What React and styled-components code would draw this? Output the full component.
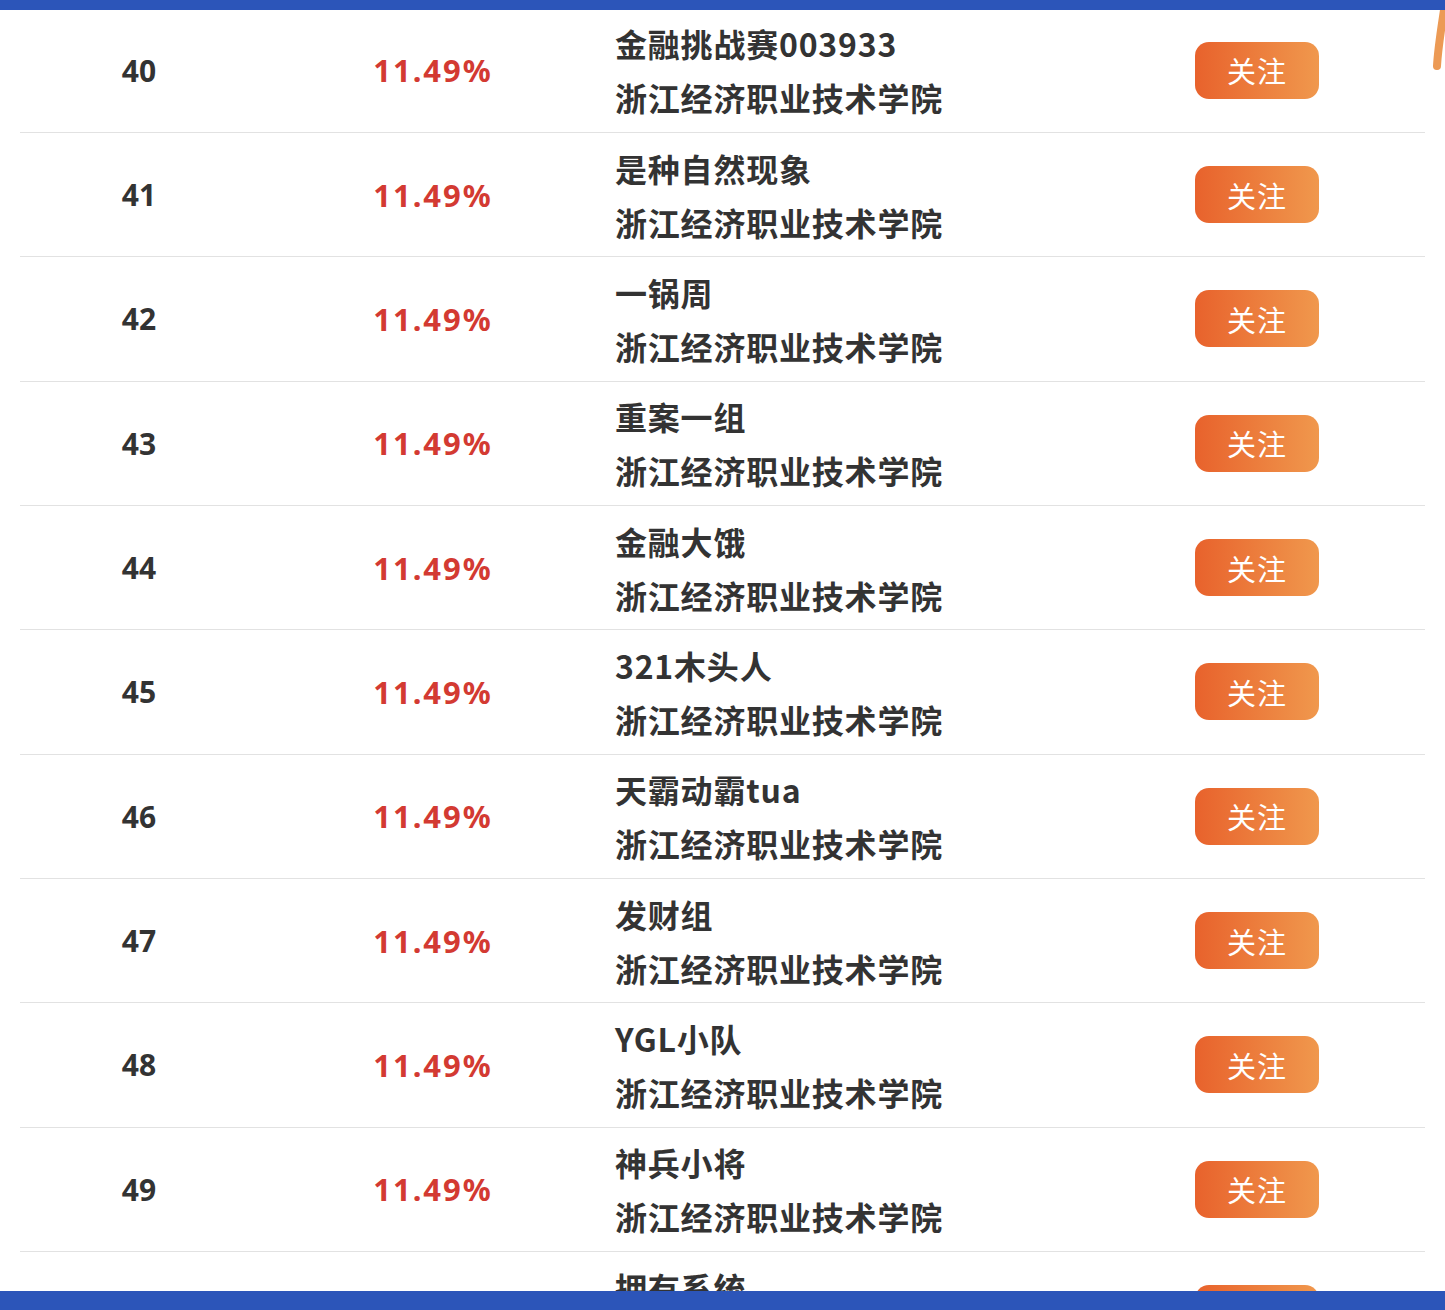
import React from "react";
import styled, { createGlobalStyle } from "styled-components";

const GlobalStyle = createGlobalStyle`
  html, body {
    margin: 0;
    padding: 0;
    background: #ffffff;
  }
  body {
    font-family: "Noto Sans CJK SC", "Noto Sans", sans-serif;
  }
`;

// Full screen frame: blue bars top and bottom, scroll area between
const Screen = styled.div`
  display: flex;
  flex-direction: column;
  width: 1445px;
  height: 1310px;
  overflow: hidden;
  background: #ffffff;
`;

const Bar = styled.div`
  flex: 0 0 ${props => props.size}px;
  background: #2c55b9;
  position: relative;
  z-index: 2;
`;

const Viewport = styled.div`
  position: relative;
  flex: 1;
  overflow: hidden;
`;

// Edge of a decoration that sits behind the list on the right
const Squiggle = styled.svg`
  position: absolute;
  top: 0;
  right: 0;
  width: 16px;
  height: 62px;
`;

const List = styled.ul`
  list-style: none;
  margin: -1.4px 20px 0;
  padding: 0;
`;

const Row = styled.li`
  box-sizing: border-box;
  display: grid;
  grid-template-columns: 238px 350px 1fr 124px;
  align-items: center;
  height: 124.33px;
  padding-right: 106px;
  border-bottom: 1px solid #e2e2e2;
`;

const Rank = styled.div`
  text-align: center;
  font-family: "Noto Sans", sans-serif;
  font-weight: 700;
  font-size: 30px;
  color: #333333;
`;

const Rate = styled.div`
  text-align: center;
  font-family: "Noto Sans", sans-serif;
  font-weight: 700;
  font-size: 31px;
  letter-spacing: 2px;
  color: #d33a32;
`;

const Team = styled.div`
  display: flex;
  flex-direction: column;
  padding-left: 7px;
  font-weight: 700;
  font-size: 32px;
  letter-spacing: 0.8px;
  line-height: 54px;
  color: #333333;
  white-space: nowrap;
`;

const FollowButton = styled.button`
  width: 124px;
  height: 57px;
  border: none;
  border-radius: 14px;
  background: linear-gradient(90deg, #e8622c 0%, #f0984d 100%);
  color: #ffffff;
  font-family: "Noto Sans CJK SC", sans-serif;
  font-size: 29px;
  font-weight: 400;
  letter-spacing: 1px;
  padding: 0;
  cursor: pointer;
`;

const rows = [
  { rank: 40, name: "金融挑战赛003933" },
  { rank: 41, name: "是种自然现象" },
  { rank: 42, name: "一锅周" },
  { rank: 43, name: "重案一组" },
  { rank: 44, name: "金融大饿" },
  { rank: 45, name: "321木头人" },
  { rank: 46, name: "天霸动霸tua" },
  { rank: 47, name: "发财组" },
  { rank: 48, name: "YGL小队" },
  { rank: 49, name: "神兵小将" },
  { rank: 50, name: "拥有系统" }
];

export default function App() {
  return (
    <Screen>
      <GlobalStyle />
      <Bar size={10} />
      <Viewport>
        <List>
          {rows.map(r => (
            <Row key={r.rank}>
              <Rank>{r.rank}</Rank>
              <Rate>11.49%</Rate>
              <Team>
                <span>{r.name}</span>
                <span>浙江经济职业技术学院</span>
              </Team>
              <FollowButton>关注</FollowButton>
            </Row>
          ))}
        </List>
        <Squiggle viewBox="0 0 16 62">
          <path
            d="M15 0 C12 20 9 38 8 56"
            fill="none"
            stroke="#ec9a55"
            strokeWidth="8"
            strokeLinecap="round"
          />
        </Squiggle>
      </Viewport>
      <Bar size={19} />
    </Screen>
  );
}
